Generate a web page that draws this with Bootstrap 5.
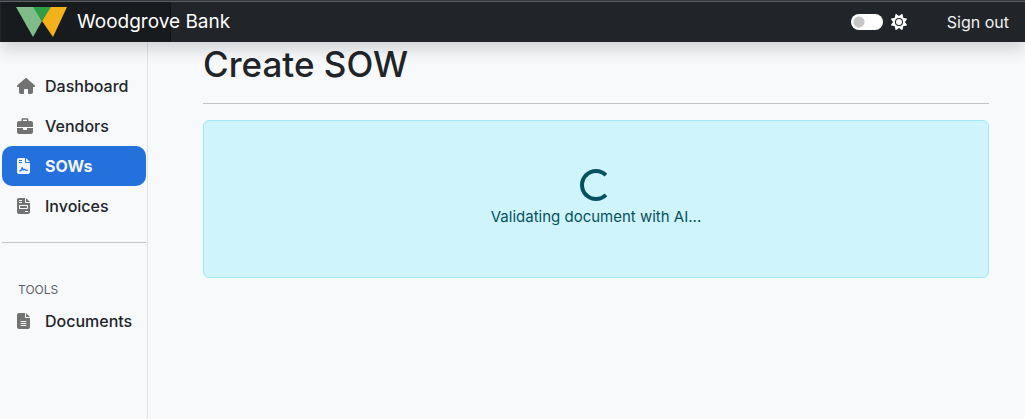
<!DOCTYPE html>
<html lang="en">
<head>
<meta charset="utf-8">
<meta name="viewport" content="width=device-width, initial-scale=1">
<title>Create SOW - Woodgrove Bank</title>
<link href="https://cdn.jsdelivr.net/npm/bootstrap@5.3.0/dist/css/bootstrap.min.css" rel="stylesheet">
<style>
  body { font-family: Inter, "Liberation Sans", sans-serif; font-size: 16px; line-height: 24px; background: #f8f9fb; color: #212529; }
  .topbar { height: 42px; background: #212529; border-top: 1px solid #34383c; box-shadow: 0 8px 16px rgba(0,0,0,.15); position: relative; z-index: 2; }
  .topbar::before { content: ""; position: absolute; inset: 0 0 auto; height: 1px; background: #5c6064; }
  .brand { width: 170px; margin: 1px 0 0 1px; padding-left: 15px; gap: 9px; background: rgba(0,0,0,.25); box-shadow: inset -1px 0 0 rgba(0,0,0,.25); color: #fff; font-size: 19px; white-space: nowrap; }
  .brand svg { flex: none; }
  .theme-switch { width: 32px; height: 16px; margin: 0; border: 0; appearance: none; border-radius: 8px; background: #fff radial-gradient(circle at 8px 8px, #c6c6c6 5px, transparent 6px); }
  .signout { color: #f1f1f2; }
  .sidebar { width: 148px; border-right: 1px solid #dee2e6; padding: 24px 1px 0 2px; min-height: calc(100vh - 42px); flex: none; }
  .sidebar .nav-link { display: flex; align-items: center; height: 40px; padding: 0 0 0 15px; gap: 10px; color: #212529; font-weight: 500; border-radius: 10px; }
  .sidebar .nav-link svg { width: 18px; height: 16px; flex: none; color: #727272; }
  .sidebar .nav-link.active { background: #2470dc; color: #f2f4fa; font-weight: 700; }
  .sidebar .nav-link.active svg { color: #f2f4fa; }
  .rule { margin: 16px 0; border-top: 1px solid #212529; opacity: .25; }
  .tools { font-size: 12px; color: #5a5e62; margin: 39px 0 3px; padding-left: 16px; line-height: 16px; font-weight: 400; }
  .content { padding: 0 36px 0 55px; min-width: 0; }
  .content h1 { font-size: 35px; line-height: 45px; margin: 0; font-weight: 500; }
  .status { padding: 48px 16px; margin: 0; min-height: 158px; color: #055160; background: #cff4fc; border: 1px solid #9eeaf9; border-radius: 6px; font-size: 15px; }
  .status .spinner-border { animation: none; display: block; margin: 0 auto 4px; width: 32px; height: 32px; border-width: 4px; }
</style>
</head>
<body>
<header class="topbar d-flex align-items-stretch">
  <a class="brand d-flex align-items-center text-decoration-none" href="#">
    <svg width="52" height="30" viewBox="0 0 52 30" aria-hidden="true">
      <path fill="#7fbc8a" d="M0 0H18L26 14 17 30Z"/>
      <path fill="#f3b11b" d="M34 0H51L37 30 26 14Z"/>
      <path fill="#2f9e44" d="M17 0H35L26 14Z"/>
    </svg>
    <span>Woodgrove Bank</span>
  </a>
  <div class="d-flex align-items-center ms-auto pe-3">
    <label class="d-flex align-items-center gap-2 text-white">
      <input class="theme-switch" type="checkbox" role="switch" aria-label="Dark mode">
      <svg width="16" height="16" viewBox="0 0 512 512" aria-hidden="true">
        <path fill="#fff" d="M361.500 1.200c5 2.100 8.600 6.600 9.600 11.900L391 121l107.900 19.800c5.300 1 9.800 4.600 11.900 9.600s1.500 10.700-1.600 15.200L446.900 256l62.300 90.300c3.100 4.500 3.700 10.200 1.600 15.200s-6.600 8.600-11.900 9.600L391 391l-19.900 107.900c-1 5.300-4.600 9.800-9.600 11.900s-10.700 1.500-15.200-1.600L256 446.900l-90.300 62.300c-4.500 3.100-10.200 3.700-15.200 1.600s-8.600-6.600-9.600-11.900L121 391 13.100 371.100c-5.300-1-9.800-4.600-11.900-9.600s-1.500-10.700 1.600-15.200L65.100 256 2.800 165.700c-3.100-4.500-3.700-10.200-1.600-15.200s6.600-8.600 11.900-9.600L121 121 140.900 13.100c1-5.300 4.600-9.800 9.600-11.900s10.700-1.500 15.200 1.600L256 65.100 346.300 2.800c4.500-3.100 10.200-3.700 15.200-1.600z"/>
        <circle cx="256" cy="256" r="112" fill="#fff" stroke="#212529" stroke-width="34"/>
      </svg>
    </label>
    <a class="signout text-decoration-none ms-3 ps-4" href="#">Sign out</a>
  </div>
</header>
<div class="d-flex">
  <nav class="sidebar" aria-label="Main">
    <ul class="nav flex-column flex-nowrap">
      <li><a class="nav-link" href="#">
        <svg viewBox="0 0 576 512" fill="currentColor" aria-hidden="true"><path d="M575.800 255.500c0 18-15 32.100-32 32.100h-32l.7 160.200c0 36-28 64.200-56 64.200h-72c-17.700 0-32-14.300-32-32v-96c0-17.700-14.300-32-32-32h-64c-17.700 0-32 14.300-32 32v96c0 17.700-14.300 32-32 32h-72c-28 0-56-28-56-56V287.600H32c-18 0-32-14-32-32.100 0-9 3-17 10-24L266.400 8c7-7 15-8 22-8s15 2 21 7l255.400 224.500c8 7 12 15 11 24z"/></svg>
        Dashboard</a></li>
      <li><a class="nav-link" href="#">
        <svg viewBox="0 0 576 512" fill="currentColor" aria-hidden="true"><path fill-rule="evenodd" d="M144 56v40H64c-35 0-64 29-64 64v128h512V160c0-35-29-64-64-64h-80V56c0-31-18-48-48-48H192c-30 0-48 17-48 48zm48 40V64c0-6 4-8 8-8h112c4 0 8 2 8 8v32zM0 320v128c0 35 29 64 64 64h384c35 0 64-29 64-64V320H320v32c0 18-14 32-32 32h-64c-18 0-32-14-32-32v-32z"/></svg>
        Vendors</a></li>
      <li><a class="nav-link active" aria-current="page" href="#">
        <svg viewBox="0 0 576 512" fill="currentColor" aria-hidden="true"><path fill-rule="evenodd" d="M64 0C29 0 0 29 0 64v384c0 35 29 64 64 64h288c35 0 64-29 64-64V160H288c-18 0-32-14-32-32V0zM288 0v128h128zM64 64h96v32H64zM64 128h96v32H64zM64 400h20c18 0 30-9 36-26l25-68c12-22 34-18 43 0l22 48c26-16 60-12 72 6l12 16h58v32h-74c-14 0-22-5-28-14-10-10-18-11-28 0-12 16-28 15-39 0l-15-27-16 36c-9 18-28 29-49 29H64z"/></svg>
        SOWs</a></li>
      <li><a class="nav-link" href="#">
        <svg viewBox="0 0 576 512" fill="currentColor" aria-hidden="true"><path fill-rule="evenodd" d="M64 0C29 0 0 29 0 64v384c0 35 29 64 64 64h288c35 0 64-29 64-64V160H288c-18 0-32-14-32-32V0zM288 0v128h128zM64 64h96v32H64zM64 128h96v32H64zM96 224h224c18 0 32 14 32 32v64c0 18-14 32-32 32H96c-18 0-32-14-32-32v-64c0-18 14-32 32-32zM96 256v64h224v-64zM256 416h96v32h-96z"/></svg>
        Invoices</a></li>
    </ul>
    <hr class="rule">
    <h2 class="tools">TOOLS</h2>
    <ul class="nav flex-column">
      <li><a class="nav-link" href="#">
        <svg viewBox="0 0 576 512" fill="currentColor" aria-hidden="true"><path fill-rule="evenodd" d="M64 0C29 0 0 29 0 64v384c0 35 29 64 64 64h288c35 0 64-29 64-64V160H288c-18 0-32-14-32-32V0zM288 0v128h128zM128 256h160c22 0 22 32 0 32H128c-22 0-22-32 0-32zM128 320h160c22 0 22 32 0 32H128c-22 0-22-32 0-32zM128 384h160c22 0 22 32 0 32H128c-22 0-22-32 0-32z"/></svg>
        Documents</a></li>
    </ul>
  </nav>
  <main class="content flex-grow-1">
    <h1>Create SOW</h1>
    <hr class="rule">
    <div class="alert status text-center" role="alert">
      <span class="spinner-border" aria-hidden="true"></span>
      <div>Validating document with AI...</div>
    </div>
  </main>
</div>
<script src="https://cdn.jsdelivr.net/npm/bootstrap@5.3.0/dist/js/bootstrap.bundle.min.js"></script>
</body>
</html>
